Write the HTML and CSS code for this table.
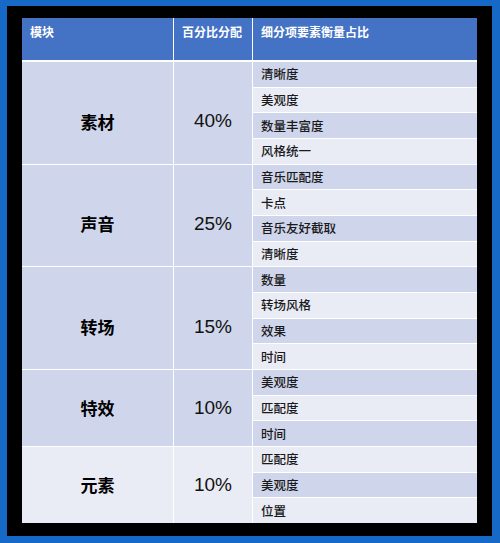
FILE: index.html
```html
<!DOCTYPE html>
<html lang="zh-CN">
<head>
<meta charset="utf-8">
<link rel="stylesheet" href="styles.css">
</head>
<body>
<div class="frame">
  <div class="table">
    <div class="th">模块</div>
    <div class="th">百分比分配</div>
    <div class="th">细分项要素衡量占比</div>

    <div class="group g4 dark r4">素材</div>
    <div class="pct g4 dark r4">40%</div>
    <div class="sub dark">清晰度</div>
    <div class="sub light">美观度</div>
    <div class="sub dark">数量丰富度</div>
    <div class="sub light">风格统一</div>

    <div class="group g4 dark r4">声音</div>
    <div class="pct g4 dark r4">25%</div>
    <div class="sub dark">音乐匹配度</div>
    <div class="sub light">卡点</div>
    <div class="sub dark">音乐友好截取</div>
    <div class="sub light">清晰度</div>

    <div class="group g4 dark r4">转场</div>
    <div class="pct g4 dark r4">15%</div>
    <div class="sub dark">数量</div>
    <div class="sub light">转场风格</div>
    <div class="sub dark">效果</div>
    <div class="sub light">时间</div>

    <div class="group dark r3">特效</div>
    <div class="pct dark r3">10%</div>
    <div class="sub dark">美观度</div>
    <div class="sub light">匹配度</div>
    <div class="sub dark">时间</div>

    <div class="group light r3">元素</div>
    <div class="pct light r3">10%</div>
    <div class="sub light">匹配度</div>
    <div class="sub dark">美观度</div>
    <div class="sub light">位置</div>
  </div>
</div>
</body>
</html>
```

FILE: styles.css
```css
* { box-sizing: border-box; }
html, body { margin: 0; padding: 0; background: #000; }
body { font-family: "Liberation Sans", "Noto Sans CJK SC", sans-serif; }

.frame {
  width: 500px;
  height: 543px;
  background: #000;
  border-style: solid;
  border-color: #1769c7;
  border-width: 6px 8px 7px 7px;
  padding: 12px 15px 13px 15px;
}

.table {
  width: 455px;
  height: 505px;
  display: grid;
  grid-template-columns: 151px 78px 224px;
  grid-template-rows: 43px repeat(18, 1fr);
  gap: 1px;
  background: #fff;
}

.th {
  background: #4472c4;
  color: #fff;
  font-family: "Noto Sans CJK SC", sans-serif;
  font-weight: 700;
  font-size: 12px;
  line-height: 16px;
  padding: 6px 8px;
  border-bottom: 1px solid #fff;
}

.dark { background: #cfd5ea; }
.light { background: #e9ebf5; }

.r4 { grid-row: span 4; }
.r3 { grid-row: span 3; }

.group, .pct {
  display: flex;
  align-items: center;
  justify-content: center;
  color: #000;
}
.group {
  grid-column: 1;
  font-family: "Noto Sans CJK SC", sans-serif;
  font-weight: 700;
  font-size: 17px;
}
.pct {
  grid-column: 2;
  font-size: 19px;
  color: #111;
}
.g4 { padding-top: 17px; }

.sub {
  grid-column: 3;
  display: flex;
  align-items: center;
  padding: 0 8px 1px 8px;
  font-family: "Noto Sans CJK SC", sans-serif;
  font-size: 12.5px;
  font-weight: 500;
  color: #1a1a1a;
}
```
